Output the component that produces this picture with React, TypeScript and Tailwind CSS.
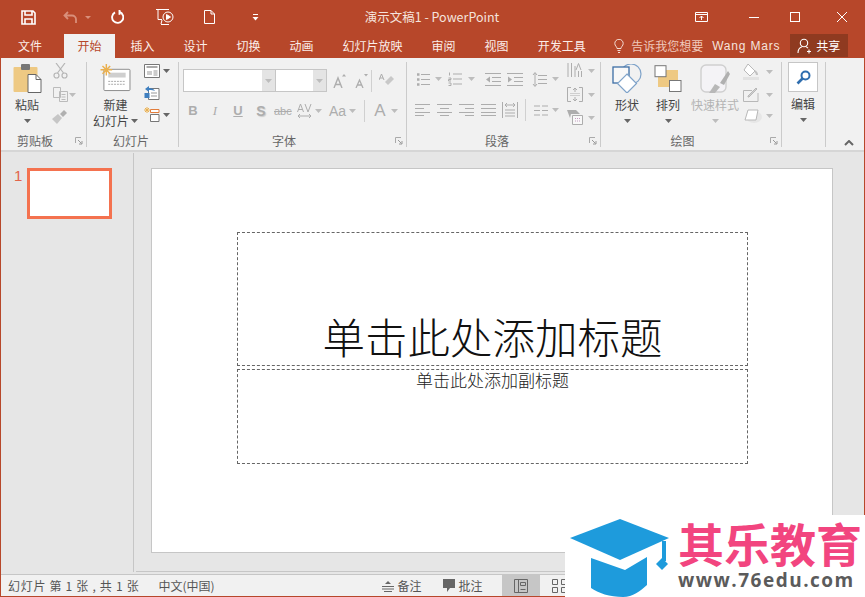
import React from "react";

const FONT = { fontFamily: '"Noto Sans CJK SC", "Liberation Sans", sans-serif' };

const Caret = ({ light = false }: { light?: boolean }) => (
  <svg width="7" height="4" viewBox="0 0 7 4" className="shrink-0">
    <path d="M0 0h7L3.5 4z" fill={light ? "#bdbdbd" : "#666"} />
  </svg>
);

const Launcher = () => (
  <svg width="8" height="8" viewBox="0 0 8 8" className="shrink-0">
    <path d="M0.5 6V0.5H6" stroke="#aaa" fill="none" />
    <path d="M3 3l3.5 3.5M7 4v3H4" stroke="#999" fill="none" />
  </svg>
);

const Sep = ({ h = "h-[22px]" }: { h?: string }) => <div className={`w-px bg-[#d0d0d0] ${h}`} />;

const Lines = ({ kind }: { kind: "left" | "center" | "right" | "just" }) => {
  const short = { left: [0, 9], center: [3, 9], right: [6, 9], just: [0, 15] }[kind];
  return (
    <svg width="15" height="12" viewBox="0 0 15 12">
      <g stroke="#adadad">
        <path d="M0 .5h15" />
        <path d={`M${short[0]} 4.5h${short[1]}`} />
        <path d="M0 8.5h15" />
        <path d={`M${short[0]} 11.5h${short[1]}`} />
      </g>
    </svg>
  );
};

const Group = ({
  w,
  label,
  labelCls = "pr-[6px]",
  launcher = true,
  children,
}: {
  w: string;
  label: string;
  labelCls?: string;
  launcher?: boolean;
  children: React.ReactNode;
}) => (
  <div className={`flex flex-col shrink-0 h-[85px] border-r border-[#cbcbcb] ${w}`}>
    <div className="flex-1 flex min-h-0">{children}</div>
    <div className="h-[21px] pt-[3px] -mb-[3px] flex items-center pr-[3px]">
      <span className={`flex-1 text-center text-[12px] leading-none text-[#666] ${labelCls}`}>{label}</span>
      {launcher && <Launcher />}
    </div>
  </div>
);

const BigBtn = ({
  w,
  ml,
  icon,
  text,
  grey = false,
}: {
  w: string;
  ml: string;
  icon: React.ReactNode;
  text: string;
  grey?: boolean;
}) => (
  <div className={`flex flex-col items-center shrink-0 ${w} ${ml}`}>
    <div className="h-[33px] flex items-center justify-center">{icon}</div>
    <span className={`mt-[2px] text-[12px] leading-[16px] whitespace-nowrap ${grey ? "text-[#b4b4b4]" : "text-[#444]"}`}>{text}</span>
    <div className="mt-[6px]">
      <Caret light={grey} />
    </div>
  </div>
);

const SmallCol = ({ children, cls }: { children: React.ReactNode; cls: string }) => (
  <div className={`flex flex-col shrink-0 ${cls}`}>{children}</div>
);

const Tab = ({ t, active = false }: { t: string; active?: boolean }) => (
  <div
    className={`h-[24px] px-[13.5px] flex items-center text-[12px] whitespace-nowrap ${
      active ? "bg-[#f1f1f1] text-[#b7472a]" : "text-[#fbeee9]"
    }`}
  >
    {t}
  </div>
);

export default function App() {
  return (
    <div style={FONT} className="relative w-screen h-screen overflow-hidden bg-[#b7472a] flex flex-col">
      {/* title bar */}
      <div className="h-[34px] flex items-center shrink-0 relative text-white">
        <div className="w-[20px] ml-[18px] flex justify-center">
          <svg width="15" height="15" viewBox="0 0 15 15" fill="none" stroke="#fff" strokeWidth="1.6">
            <path d="M1 1h11l2 2v11H1z" />
            <path d="M4 1v4h7V1M4 14V9h7v5" />
          </svg>
        </div>
        <div className="ml-[25px] flex items-center gap-[7px]">
          <svg width="15" height="13" viewBox="0 0 15 13" fill="none" stroke="#d98f7a" strokeWidth="1.8">
            <path d="M5 1L1.5 4.5 5 8M2 4.500h7a4 4 0 0 1 4 4V12" />
          </svg>
          <svg width="6" height="3" viewBox="0 0 6 3">
            <path d="M0 0h6L3 3z" fill="#d98f7a" />
          </svg>
        </div>
        <div className="ml-[19px]">
          <svg width="14" height="14" viewBox="0 0 14 14" fill="none" stroke="#fff" strokeWidth="1.9">
            <path d="M5 2.400A5.600 5.600 0 1 0 9.500 2" />
            <path d="M9.500 0v4.800" />
          </svg>
        </div>
        <div className="ml-[32px]">
          <svg width="19" height="16" viewBox="0 0 19 16" fill="none" stroke="#fff">
            <path d="M0 .5h13M2 .5v10h4" />
            <circle cx="12" cy="8" r="5" />
            <path d="M10.500 5.500L14.500 8l-4 2.500z" fill="#fff" />
            <path d="M5 15.500h8M6 11l-1 4" />
          </svg>
        </div>
        <div className="ml-[29px]">
          <svg width="11" height="14" viewBox="0 0 11 14" fill="none" stroke="#fff">
            <path d="M.5.5h6.500l3.500 3.500v9.500H.5zM7 .5V4h3.500" />
          </svg>
        </div>
        <div className="ml-[37px]">
          <svg width="7" height="7" viewBox="0 0 7 7">
            <path d="M1 .5h5" stroke="#fff" />
            <path d="M.5 3h6L3.500 6.500z" fill="#fff" />
          </svg>
        </div>
        <div className="flex-1 text-center text-[12.500px] text-[#f5e3dd] pr-[90px] whitespace-nowrap">演示文稿1 - PowerPoint</div>
        <div className="flex items-center shrink-0 mr-[18px]">
          <svg width="13" height="10" viewBox="0 0 13 10" fill="none" stroke="#fff">
            <path d="M.5.5h12v9H.5zM.5 2.500h12M6.500 8V4M4.500 6l2-2 2 2" />
          </svg>
          <div className="ml-[41px] w-[10px] h-px bg-white" />
          <div className="ml-[31px] w-[10px] h-[10px] border border-white" />
          <svg className="ml-[37px]" width="10" height="10" viewBox="0 0 10 10" stroke="#fff">
            <path d="M0 0l10 10M10 0L0 10" />
          </svg>
        </div>
      </div>

      {/* tabs */}
      <div className="h-[24px] shrink-0 flex items-center relative">
        <div className="w-[60px] ml-0 text-center text-[12px] text-[#fbeee9] mr-[4px]">文件</div>
        <div className="flex gap-[2px]">
          <Tab t="开始" active />
          <Tab t="插入" />
          <Tab t="设计" />
          <Tab t="切换" />
          <Tab t="动画" />
          <Tab t="幻灯片放映" />
          <Tab t="审阅" />
          <Tab t="视图" />
          <Tab t="开发工具" />
        </div>
        <svg className="ml-[15px]" width="10" height="14" viewBox="0 0 10 14" fill="none" stroke="#f4dcd4">
          <path d="M3 9.500C3 7.500.8 7 .8 4.500a4.200 4.200 0 0 1 8.400 0C9.200 7 7 7.500 7 9.500zM3.500 11.500h3M4 13.500h2" />
        </svg>
        <span className="ml-[7px] text-[12px] text-[#efc9bc] whitespace-nowrap">告诉我您想要</span>
        <span className="ml-[9px] text-[12px] tracking-[0.8px] text-[#f5e3dd] whitespace-nowrap" style={{ fontFamily: '"Liberation Sans", sans-serif' }}>
          Wang Mars
        </span>
        <div className="ml-[10px] w-[58px] h-[23px] -mt-px bg-[#8f3a20] flex items-center pl-[7px] gap-[3px] text-white text-[12px]">
          <svg width="16" height="16" viewBox="0 0 16 16" fill="none" stroke="#fff" strokeWidth="1.100">
            <circle cx="7" cy="5" r="3.700" />
            <path d="M1 15c0-3.500 2-5.500 4-6.200M9 8.800c1 .4 1.500.8 2 1.500M12 11.500v4M10 13.500h4" />
          </svg>
          共享
        </div>
      </div>

      {/* ribbon */}
      <div className="h-[94px] shrink-0 mx-px bg-[#f1f1f1] border-b-2 border-[#d6d6d6] flex pt-[4px] relative">
        {/* 剪贴板 */}
        <Group w="w-[86px]" label="剪贴板">
          <BigBtn
            w="w-[40px]"
            ml="ml-[6px]"
            text="粘贴"
            icon={
              <svg width="29" height="30" viewBox="0 0 29 30">
                <rect x="0.500" y="3" width="24" height="25" rx="1" fill="#eec983" />
                <rect x="8" y="0" width="9" height="6" rx="1" fill="#777" />
                <path d="M15 10.500h8l5 5v13H15z" fill="#fff" stroke="#666" />
                <path d="M23 10.500v5h5" fill="none" stroke="#666" />
              </svg>
            }
          />
          <SmallCol cls="ml-[3px] w-[20px] items-center pt-[1px] gap-[8px]">
            <svg width="15" height="16" viewBox="0 0 15 16" fill="none" stroke="#b5b5b5" strokeWidth="1.200">
              <path d="M3 0l7.500 10M12 0L4.500 10" />
              <circle cx="3.500" cy="12.500" r="2.500" />
              <circle cx="11.500" cy="12.500" r="2.500" />
            </svg>
            <div className="flex items-center">
              <svg width="15" height="15" viewBox="0 0 15 15" fill="none" stroke="#bbb">
                <path d="M.5.5h7v10h-7zM6.500 4.500h8v10h-8zM8.500 7.500h4M8.500 10h4M8.500 12.500h4" fill="#f1f1f1" />
              </svg>
            </div>
            <svg width="16" height="14" viewBox="0 0 16 14">
              <path d="M0 9l6-5 4 4-5 6z" fill="#c6c6c6" />
              <path d="M8 4l4-4 3 3-4 4z" fill="#b0b0b0" />
            </svg>
          </SmallCol>
          <div className="ml-[-1px] mt-[31px]">
            <Caret light />
          </div>
        </Group>

        {/* 幻灯片 */}
        <Group w="w-[92px]" label="幻灯片" labelCls="" launcher={false}>
          <div className="flex flex-col items-center w-[47px] ml-[5px] shrink-0">
            <svg width="31" height="29" viewBox="0 0 31 29" className="mt-[2px]">
              <rect x="3.500" y="5.500" width="27" height="22" rx="1" fill="#fff" stroke="#8a8a8a" />
              <rect x="8" y="9" width="18" height="5" fill="#cfcfcf" />
              <path d="M8 18h18M8 21h18" stroke="#a8a8a8" strokeDasharray="2 1" />
              <path d="M6 0v12M0 6h12M2 2l8 8M10 2l-8 8" stroke="#eab04f" strokeWidth="1.500" />
            </svg>
            <span className="mt-[5px] text-[12px] leading-[16px] text-[#444]">新建</span>
            <span className="text-[12px] leading-[16px] text-[#444] whitespace-nowrap flex items-center gap-[2px]">
              幻灯片
              <Caret />
            </span>
          </div>
          <SmallCol cls="ml-[5px] gap-[7px] pt-[2px]">
            <div className="flex items-center gap-[3px]">
              <svg width="16" height="14" viewBox="0 0 16 14" fill="none" stroke="#777">
                <path d="M.5.5h15v13H.5z" fill="#fff" />
                <path d="M2.500 3h11" stroke="#aaa" strokeWidth="2" />
                <path d="M3 7h5v4H3z" fill="#ccc" stroke="none" />
                <path d="M9.500 7h4M9.500 9h4M9.500 11h4" stroke="#999" />
              </svg>
              <Caret />
            </div>
            <svg width="16" height="15" viewBox="0 0 16 15" fill="none">
              <path d="M4.500 3.500h10.500v11H4.500z" fill="#fff" stroke="#777" />
              <path d="M7 11h6M7 8h6" stroke="#999" />
              <path d="M1 4l4-3v2c3 0 5 1 6 3-2-1-3-1-6-1v2z" fill="#3f7fbf" />
              <rect x="0.500" y="8" width="5" height="5" fill="#3f7fbf" />
            </svg>
            <div className="flex items-center gap-[3px]">
              <svg width="16" height="15" viewBox="0 0 16 15" fill="none">
                <path d="M3 0v6M0 3h6M1 1l4 4M5 1L1 5" stroke="#eab04f" />
                <path d="M6.500 2.500H15v3H6.500z" stroke="#e27d3b" fill="#fff" />
                <path d="M6.500 7.500H15v7H6.500z" stroke="#777" fill="#fff" />
              </svg>
              <Caret />
            </div>
          </SmallCol>
        </Group>

        {/* 字体 */}
        <Group w="w-[228px]" label="字体">
          <div className="flex flex-col pl-[4px] pt-[7px]">
            <div className="flex items-center h-[23px]">
              <div className="w-[93px] h-[23px] border border-[#c6c6c6] bg-white flex justify-end">
                <div className="w-[13px] bg-[#e4e4e4] flex items-center justify-center">
                  <Caret light />
                </div>
              </div>
              <div className="w-[51px] h-[23px] border border-[#c6c6c6] border-l-0 ml-[0px] bg-white flex justify-end">
                <div className="w-[13px] bg-[#e4e4e4] flex items-center justify-center">
                  <Caret light />
                </div>
              </div>
              <svg className="ml-[6px]" width="13" height="14" viewBox="0 0 13 14" fill="none" stroke="#adadad" strokeWidth="1.400">
                <path d="M1 14l4-10 4 10M2.500 10.500h5" />
                <path d="M9 2.500h4L11 0z" fill="#adadad" stroke="none" />
              </svg>
              <svg className="ml-[9px]" width="13" height="14" viewBox="0 0 13 14" fill="none" stroke="#adadad" strokeWidth="1.300">
                <path d="M1 14l3.500-8 3.500 8M2.300 11h4.500" />
                <path d="M9 0h4l-2 2.500z" fill="#adadad" stroke="none" />
              </svg>
              <div className="ml-[3px] mr-[7px]">
                <Sep />
              </div>
              <svg width="15" height="15" viewBox="0 0 15 15">
                <path d="M6 9l6-6 3 3-6 6z" fill="#c8c8c8" />
                <path d="M0 7l2.500-6L5 7M1 5h3" fill="none" stroke="#adadad" />
              </svg>
            </div>
            <div className="flex items-center h-[24px] mt-[7px] text-[#adadad]" style={{ fontFamily: '"Liberation Sans", sans-serif' }}>
              <span className="w-[10px] ml-[5px] text-center text-[13px] font-bold">B</span>
              <span className="w-[10px] ml-[12px] text-center text-[13px] italic" style={{ fontFamily: '"Liberation Serif", serif' }}>I</span>
              <span className="w-[10px] ml-[13px] text-center text-[13px] font-bold underline">U</span>
              <span className="w-[10px] ml-[13px] text-center text-[14px] font-bold [text-shadow:1px_1px_1px_#ccc]">S</span>
              <span className="w-[16px] ml-[8px] text-center text-[11px] line-through">abc</span>
              <svg className="ml-[7px]" width="15" height="16" viewBox="0 0 15 16" fill="none" stroke="#adadad">
                <path d="M.5 9L3.500 1l3 8M1.500 6.500h4M8 1l3 8 3-8" />
                <path d="M1 13h13M3 11l-2 2 2 2M12 11l2 2-2 2" />
              </svg>
              <div className="ml-[3px]"><Caret light /></div>
              <span className="ml-[7px] text-[14px]">Aa</span>
              <div className="ml-[3px]"><Caret light /></div>
              <div className="ml-[8px] mr-[9px]"><Sep /></div>
              <span className="text-[17px]">A</span>
              <div className="ml-[6px]"><Caret light /></div>
            </div>
          </div>
        </Group>

        {/* 段落 */}
        <Group w="w-[194px]" label="段落" labelCls="pr-[2px]">
          <div className="flex flex-col pl-[9px] pt-[7px] w-[160px] shrink-0">
            <div className="flex items-center h-[20px]">
              <svg width="14" height="13" viewBox="0 0 14 13" stroke="#adadad">
                <path d="M5 1.500h9M5 6.500h9M5 11.500h9" />
                <path d="M1 1.500h2.500M1 6.500h2.500M1 11.500h2.500" strokeWidth="2.500" />
              </svg>
              <div className="ml-[5px]"><Caret light /></div>
              <svg className="ml-[6px]" width="14" height="14" viewBox="0 0 14 14" stroke="#adadad">
                <path d="M5 2h9M5 7h9M5 12h9" />
                <path d="M1.500 .5v3M.5 6h2.500v1.500h-2.500v1.500h2.500M.5 11h2.500v2.500h-2.500" fill="none" />
              </svg>
              <div className="ml-[6px]"><Caret light /></div>
              <svg className="ml-[10px]" width="16" height="13" viewBox="0 0 16 13" stroke="#adadad" fill="none">
                <path d="M0 .5h16M7 4.500h9M7 8.500h9M0 12.500h16" />
                <path d="M5 3.500L1 6.500l4 3z" fill="#adadad" stroke="none" />
              </svg>
              <svg className="ml-[6px]" width="16" height="13" viewBox="0 0 16 13" stroke="#adadad" fill="none">
                <path d="M0 .5h16M7 4.500h9M7 8.500h9M0 12.500h16" />
                <path d="M1 3.500l4 3-4 3z" fill="#adadad" stroke="none" />
              </svg>
              <svg className="ml-[9px]" width="15" height="17" viewBox="0 0 15 17" stroke="#adadad" fill="none">
                <path d="M6 4.500h9M6 8.500h9M6 12.500h9M3 2v13M1 4l2-2.500L5 4M1 13l2 2.500L5 13" />
              </svg>
              <div className="ml-[5px]"><Caret light /></div>
            </div>
            <div className="flex items-center h-[20px] mt-[11px]">
              <div className="-ml-[1px]"><Lines kind="left" /></div>
              <div className="ml-[7px]"><Lines kind="center" /></div>
              <div className="ml-[7px]"><Lines kind="right" /></div>
              <div className="ml-[7px]"><Lines kind="just" /></div>
              <svg className="ml-[6px]" width="16" height="16" viewBox="0 0 16 16" stroke="#adadad" fill="none">
                <path d="M.5 0v16M15.500 0v16M3 3h10M5 1L3 3l2 2M11 1l2 2-2 2M3 8h10M3 11h10M3 14h10" />
              </svg>
              <div className="ml-[7px] mr-[8px]"><Sep /></div>
              <svg width="14" height="11" viewBox="0 0 14 11" stroke="#adadad">
                <path d="M0 1h6M8 1h6M0 5.500h6M8 5.500h6M0 10h6M8 10h6" />
              </svg>
              <div className="ml-[4px]"><Caret light /></div>
            </div>
          </div>
          <SmallCol cls="gap-[8px] pt-[1px]">
            <div className="flex items-center gap-[5px]">
              <svg width="16" height="16" viewBox="0 0 16 16" stroke="#adadad" fill="none">
                <path d="M1 0v14M4.500 0v14M8 3v11M11.500 8v6M14.500 8v6" />
                <path d="M9 7l2.500-6.500L14 7" />
              </svg>
              <Caret light />
            </div>
            <div className="flex items-center gap-[5px]">
              <svg width="16" height="15" viewBox="0 0 16 15" stroke="#adadad" fill="none">
                <path d="M4 .5H.5v14H4M12 .5h3.500v14H12M8 1v4M6 3l2-2 2 2M8 10v4M6 12l2 2 2-2" />
                <path d="M3.500 6.500h9M3.500 8.500h9" strokeDasharray="1 1" />
              </svg>
              <Caret light />
            </div>
            <div className="flex items-center gap-[5px]">
              <svg width="16" height="15" viewBox="0 0 16 15" fill="none">
                <path d="M0 0h9l4 4H4L3 8z" fill="#adadad" />
                <path d="M5.500 5.500h10v9h-10z" fill="#f8f8f8" stroke="#adadad" />
                <path d="M8 8.500h5M8 11h5" stroke="#c59cc0" strokeDasharray="1 1" />
              </svg>
              <Caret light />
            </div>
          </SmallCol>
        </Group>

        {/* 绘图 */}
        <Group w="w-[181px]" label="绘图">
          <BigBtn
            w="w-[30px]"
            ml="ml-[11px]"
            text="形状"
            icon={
              <svg width="30" height="29" viewBox="0 0 30 29" fill="none">
                <circle cx="19" cy="10" r="10" fill="#f1f1f1" stroke="#7fa3c9" strokeWidth="1.200" />
                <rect x="1" y="3" width="16" height="16" fill="#f8f8f8" stroke="#3c6ea5" strokeWidth="1.300" />
                <path d="M15 10l9.500 9.500L15 29 5.500 19.500z" fill="#fff" stroke="#7fa3c9" strokeWidth="1.200" />
              </svg>
            }
          />
          <BigBtn
            w="w-[30px]"
            ml="ml-[11px]"
            text="排列"
            icon={
              <svg width="28" height="27" viewBox="0 0 28 27" fill="none">
                <rect x="4" y="5" width="20" height="17" fill="#eec983" />
                <rect x="15" y="6" width="9" height="6" fill="#eec983" />
                <rect x="1" y="0.700" width="11" height="11" fill="#fff" stroke="#777" />
                <rect x="15.500" y="15.500" width="11.500" height="11" fill="#fff" stroke="#777" />
              </svg>
            }
          />
          <BigBtn
            w="w-[52px]"
            ml="ml-[6px]"
            text="快速样式"
            grey
            icon={
              <svg width="30" height="30" viewBox="0 0 30 30" fill="none">
                <rect x="1" y="1" width="25" height="27" rx="5" fill="#f4f3f6" stroke="#cfcfcf" strokeWidth="1.400" />
                <path d="M9 29l6-9 5 3-5 6z" fill="#b8b8b8" />
                <path d="M20 19l8-12 2 3-6 11z" fill="#b0b0b0" />
              </svg>
            }
          />
          <SmallCol cls="ml-[2px] pt-[1px] gap-[7px]">
            <div className="flex items-center gap-[6px]">
              <svg width="17" height="17" viewBox="0 0 17 17" fill="none">
                <path d="M5 1l7 7-5 5-6-6z" stroke="#b8b8b8" fill="#fff" />
                <path d="M12 8c2 2 2 3 2 4" stroke="#c2c2c2" strokeWidth="2" />
                <rect x="0" y="14" width="16" height="3" fill="#e2e2e2" />
              </svg>
              <Caret light />
            </div>
            <div className="flex items-center gap-[6px]">
              <svg width="17" height="15" viewBox="0 0 17 15" fill="none" stroke="#b8b8b8">
                <path d="M15 6v8.500H.5V3.500H9" />
                <path d="M5 10l1 0 8-8-1-1-8 8z" fill="#d0d0d0" />
              </svg>
              <Caret light />
            </div>
            <div className="flex items-center gap-[4px]">
              <svg width="19" height="14" viewBox="0 0 19 14">
                <ellipse cx="11" cy="8" rx="8" ry="6" fill="#e6e6e6" />
                <path d="M5 1h10l-2 10H2z" fill="#fff" stroke="#b8b8b8" />
              </svg>
              <Caret light />
            </div>
          </SmallCol>
        </Group>

        {/* 编辑 */}
        <Group w="w-[44px]" label="" labelCls="" launcher={false}>
          <div className="flex flex-col items-center w-full pr-[1px]">
            <div className="w-[30px] h-[30px] border border-[#c6c6c6] bg-white flex items-center justify-center">
              <svg width="15" height="15" viewBox="0 0 15 15" fill="none">
                <circle cx="9.500" cy="5.500" r="4" stroke="#2f6eaf" strokeWidth="2" />
                <path d="M6.500 8.500L1.500 13.500" stroke="#2f6eaf" strokeWidth="2.600" />
              </svg>
            </div>
            <span className="mt-[4px] text-[12px] leading-[16px] text-[#444]">编辑</span>
            <div className="mt-[6px]"><Caret /></div>
          </div>
        </Group>

        <div className="flex-1 flex items-end justify-end pr-[10px] pb-[4px]">
          <svg width="10" height="6" viewBox="0 0 10 6" fill="none" stroke="#666" strokeWidth="2">
            <path d="M1 5l4-4 4 4" />
          </svg>
        </div>
      </div>

      {/* body */}
      <div className="flex-1 min-h-0 mx-px bg-[#e6e6e6] flex pb-[2px]">
        <div className="w-[133px] shrink-0 border-r border-[#c6c6c6] mt-[1px] flex items-start pt-[15px] pl-[13px] gap-[5px]">
          <span className="text-[15px] leading-[16px] text-[#e2644a]" style={{ fontFamily: '"Liberation Sans", sans-serif' }}>1</span>
          <div className="w-[85px] h-[51px] bg-white border-[3px] border-[#f4724f]" />
        </div>
        <div className="flex-1 min-w-0 ml-[2px] pl-[15px] pr-[32px] pt-[16px] border-b border-[#c6c6c6]">
          <div className="w-[682px] h-[385px] bg-white border border-[#c6c6c6] flex flex-col items-center pt-[63px] pl-[1px]">
            <div className="w-[511px] h-[134px] border border-dashed border-[#666] flex items-end justify-center">
              <span className="text-[42.500px] font-light leading-[50px] text-[#111] pb-[4px] whitespace-nowrap">
                单击此处添加标题
              </span>
            </div>
            <div className="w-[511px] h-[95px] mt-[3px] border border-dashed border-[#666] flex justify-center">
              <span className="text-[17px] font-light leading-[20px] text-[#222]">单击此处添加副标题</span>
            </div>
          </div>
        </div>
      </div>

      {/* status bar */}
      <div className="h-[22px] shrink-0 mx-px mb-px bg-[#f1f1f1] border-t border-[#c6c6c6] flex items-center text-[12px] text-[#555]">
        <span className="ml-[7px] whitespace-pre tracking-[0.7px]">幻灯片 第 1 张 , 共 1 张</span>
        <span className="ml-[19px] whitespace-nowrap">中文(中国)</span>
        <svg className="ml-[167px]" width="12" height="12" viewBox="0 0 12 12" stroke="#666" fill="none">
          <path d="M0 6.500h12M0 9h12M2 11.500h8" />
          <path d="M3 4l3-3 3 3z" fill="#666" stroke="none" />
        </svg>
        <span className="ml-[4px]">备注</span>
        <svg className="ml-[21px]" width="12" height="13" viewBox="0 0 12 13">
          <path d="M0 0h12v9H7l-3 4V9H0z" fill="#666" />
        </svg>
        <span className="ml-[4px]">批注</span>
        <div className="ml-[19px] w-[38px] h-[21px] bg-[#c6c6c6] flex items-center justify-center">
          <svg width="14" height="14" viewBox="0 0 14 14" fill="none" stroke="#666">
            <path d="M.5.5h13v13H.5zM4.500.5v13M6.500 3.500h5v3h-5zM6.500 10.500h5" />
          </svg>
        </div>
        <svg className="ml-[12px]" width="15" height="14" viewBox="0 0 15 14" fill="none" stroke="#666">
          <path d="M.5.500h5v5h-5zM9.500.500h5v5h-5zM.5 8.500h5v5h-5zM9.500 8.500h5v5h-5z" />
        </svg>
      </div>

      {/* watermark */}
      <div className="absolute right-0 bottom-0 w-[300px] h-[82px] bg-white flex">
        <svg className="shrink-0" width="110" height="82" viewBox="0 0 110 82">
          <path d="M26 43L60 55 82 42V70C75 76 68 82 58 82 45 82 33 78 26 73z" fill="#1e9bdc" />
          <path d="M5 23L55 4l49 19-49 22z" fill="#1e9bdc" />
          <path d="M99 26v20" stroke="#1e9bdc" strokeWidth="4" />
          <path d="M97 43l6 6-6 6-6-6z" fill="#1e9bdc" />
        </svg>
        <div className="flex flex-col ml-[3px] pt-[1px]">
          <span className="text-[46px] leading-[52px] font-bold text-[#f2457f] whitespace-nowrap">其乐教育</span>
          <span className="mt-[1px] text-[19px] leading-[22px] font-bold tracking-[1.500px] text-[#5b5b5b] whitespace-nowrap" style={{ fontFamily: '"Open Sans", sans-serif' }}>
            www.76edu.com
          </span>
        </div>
      </div>
    </div>
  );
}
